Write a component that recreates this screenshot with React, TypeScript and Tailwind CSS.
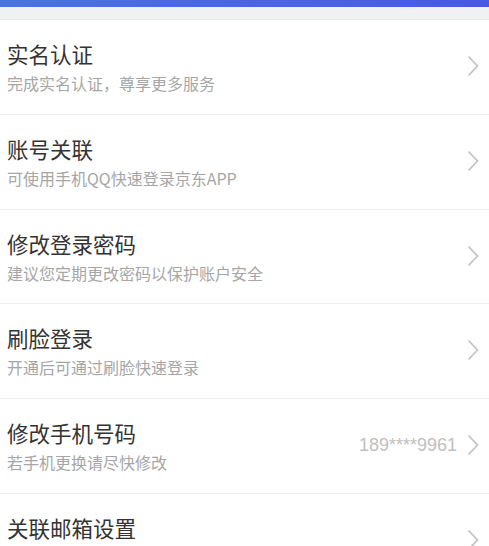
import React from "react";

const rows = [
  { title: "实名认证", sub: "完成实名认证，尊享更多服务" },
  { title: "账号关联", sub: "可使用手机QQ快速登录京东APP" },
  { title: "修改登录密码", sub: "建议您定期更改密码以保护账户安全" },
  { title: "刷脸登录", sub: "开通后可通过刷脸快速登录" },
  { title: "修改手机号码", sub: "若手机更换请尽快修改", value: "189****9961" },
  { title: "关联邮箱设置", sub: "" },
];

function Chevron() {
  return (
    <svg width="12" height="22" viewBox="0 0 12 22" className="shrink-0">
      <polyline points="1.5,1.5 10.5,11 1.5,20.5" fill="none" stroke="#c4c4c4" strokeWidth="1.8" />
    </svg>
  );
}

export default function App() {
  return (
    <div
      className="w-[489px] h-[546px] overflow-hidden bg-white"
      style={{ fontFamily: '"Noto Sans CJK SC", "Noto Sans", sans-serif' }}
    >
      <div className="h-[7px] bg-gradient-to-r from-[#4b72e2] to-[#4858e8]" />
      <div className="h-[13px] bg-[#f0f1f3] border-b border-[#e8e9ec]" />
      {rows.map((r, i) => (
        <div
          key={i}
          className="h-[94.75px] border-b border-[#ececec] flex items-start justify-between pl-[7px] pr-[10px] bg-white"
        >
          <div className="flex flex-col pt-[21px]">
            <div className="text-[21.5px] leading-[26px] text-[#333333]">{r.title}</div>
            <div className="mt-[5px] text-[16px] leading-[22px] text-[#a6a6a6]">{r.sub}</div>
          </div>
          <div className="flex items-center gap-[10px] pt-[35px]">
            {r.value && (
              <span
                className="text-[18px] text-[#c0c0c0] leading-[22px]"
                style={{ fontFamily: '"Liberation Sans", sans-serif' }}
              >
                {r.value}
              </span>
            )}
            <Chevron />
          </div>
        </div>
      ))}
    </div>
  );
}
